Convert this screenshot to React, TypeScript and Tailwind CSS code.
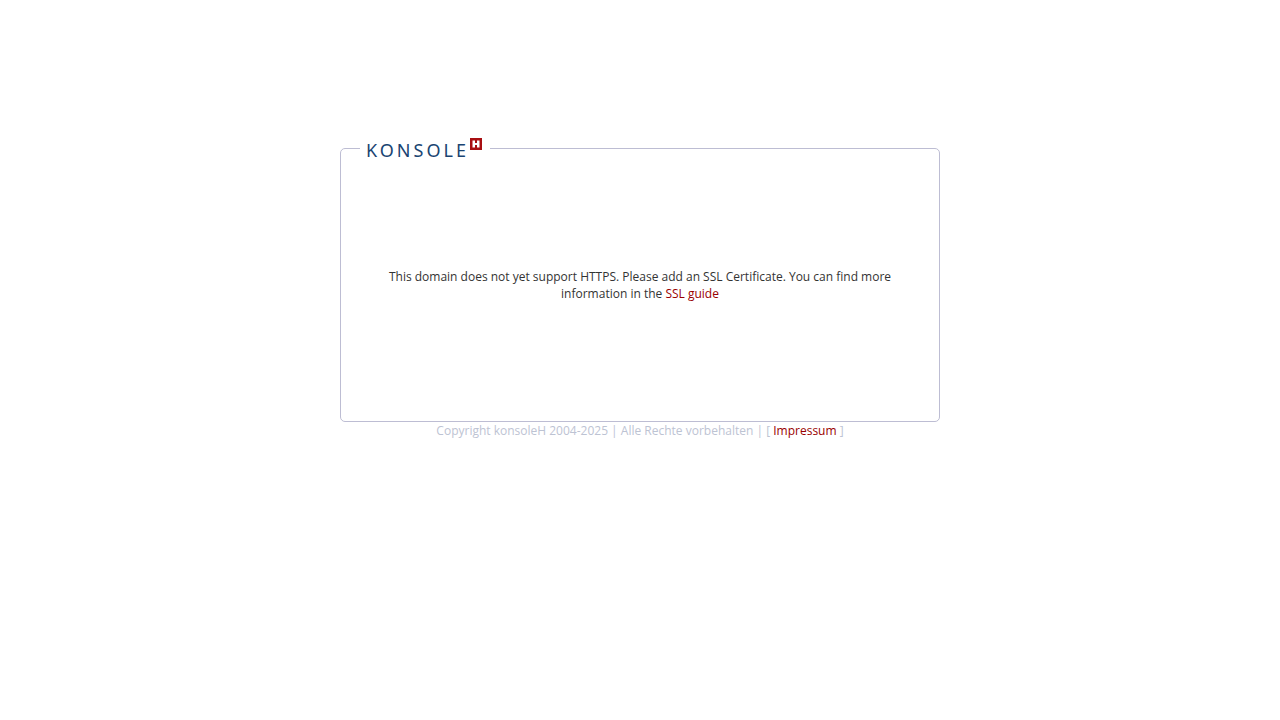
function Logo() {
  return (
    <div className="absolute -top-3 left-[19px] flex h-6 w-[130px] items-start bg-white pl-1.5">
      <span className="pt-[3px] font-['Noto_Sans',sans-serif] text-[18px] leading-5 tracking-[3px] text-[#1a4472]">
        KONSOLE
      </span>
      <svg className="mt-px ml-px h-3 w-3 shrink-0" viewBox="0 0 12 12" aria-hidden="true">
        <rect width="12" height="12" fill="#a80f12" />
        <path d="M2.500 2.500h2.500v2.500h2V2.500h2.500v7H7V7H5v2.500H2.500z" fill="#fff" />
      </svg>
    </div>
  );
}

export default function App() {
  return (
    <div className="min-h-screen bg-white px-4 pt-[148px] font-['Open_Sans',sans-serif] text-xs leading-[17px] text-[#333333]">
      <main className="relative mx-auto flex min-h-[274px] max-w-[600px] items-center justify-center rounded-[5px] border border-[#bdbdd3] px-10 text-center">
        <Logo />
        <p>
          This domain does not yet support HTTPS. Please add an SSL Certificate. You can find more
          information in the{' '}
          <a href="#ssl-guide" className="text-[#990000]">
            SSL guide
          </a>
        </p>
      </main>

      <footer className="text-center text-[#bdc3d3]">
        Copyright konsoleH 2004-2025 | Alle Rechte vorbehalten | [{' '}
        <a href="#impressum" className="text-[#990000]">
          Impressum
        </a>{' '}
        ]
      </footer>
    </div>
  );
}
